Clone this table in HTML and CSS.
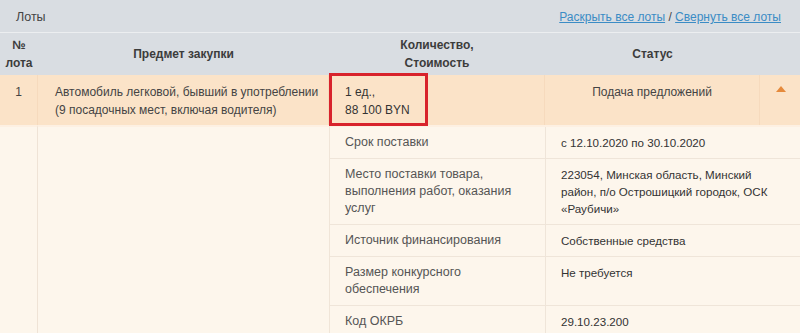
FILE: index.html
```html
<!DOCTYPE html>
<html lang="ru">
<head>
<meta charset="utf-8">
<title>Лоты</title>
<link rel="stylesheet" href="styles.css">
</head>
<body>
<div class="panel">
  <div class="panel-head">
    <span class="panel-title">Лоты</span>
    <span class="panel-links"><a href="#" class="link">Раскрыть все лоты</a> / <a href="#" class="link">Свернуть все лоты</a></span>
  </div>
  <div class="lots">
    <div class="th th-num">№<br>лота</div>
    <div class="th">Предмет закупки</div>
    <div class="th">Количество,<br>Стоимость</div>
    <div class="th">Статус</div>
    <div class="th"></div>

    <div class="td td-num">1</div>
    <div class="td td-subject">Автомобиль легковой, бывший в употреблении<br>(9 посадочных мест, включая водителя)</div>
    <div class="td td-qty">1 ед.,<br>88 100 BYN<span class="highlight"></span></div>
    <div class="td td-status">Подача предложений</div>
    <div class="td td-toggle"><span class="arrow-up"></span></div>

    <div class="blank blank-num"></div>
    <div class="blank blank-subject"></div>
    <div class="details">
      <div class="dl">Срок поставки</div>
      <div class="dv">с 12.10.2020 по 30.10.2020</div>
      <div class="dl">Место поставки товара,<br>выполнения работ, оказания<br>услуг</div>
      <div class="dv">223054, Минская область, Минский<br>район, п/о Острошицкий городок, ОСК<br>«Раубичи»</div>
      <div class="dl">Источник финансирования</div>
      <div class="dv">Собственные средства</div>
      <div class="dl">Размер конкурсного<br>обеспечения</div>
      <div class="dv">Не требуется</div>
      <div class="dl">Код ОКРБ</div>
      <div class="dv">29.10.23.200</div>
    </div>
  </div>
</div>
</body>
</html>
```
FILE: styles.css
```css
html, body {
  margin: 0;
  padding: 0;
  background: #fdf6ec;
}
body {
  font-family: "Liberation Sans", Arial, sans-serif;
  font-size: 12px;
  color: #444;
  width: 800px;
  overflow: hidden;
}
.panel {
  width: 800px;
}
.panel-head {
  display: flex;
  justify-content: space-between;
  align-items: center;
  height: 32px;
  padding: 0 19px 0 16px;
  background: #d9dde2;
  border-bottom: 1px solid #eceef0;
}
.panel-title {
  color: #444;
  font-size: 12.5px;
  padding-top: 2px;
}
.panel-links {
  color: #444;
  font-size: 12px;
  padding-top: 2px;
}
.link {
  color: #3b8cc5;
  text-decoration: underline;
}
.lots {
  display: grid;
  grid-template-columns: 38px 291px 216px 215px 40px;
}
.th {
  background: #d9dde2;
  height: 42px;
  display: flex;
  align-items: center;
  justify-content: center;
  text-align: center;
  font-weight: bold;
  color: #3c3c3c;
  line-height: 18px;
}
.td {
  background: #fbe3c8;
  height: 50px;
  box-sizing: border-box;
  padding: 8px 0 0;
  line-height: 18px;
  font-size: 12px;
  color: #444;
  white-space: nowrap;
  border-right: 1px solid #f6dabd;
}
.td-num {
  text-align: center;
}
.td-subject {
  padding-left: 17px;
}
.td-qty {
  position: relative;
  padding-left: 16px;
  color: #333;
}
.td-status {
  text-align: center;
}
.td-toggle {
  border-right: none;
  display: flex;
  justify-content: center;
  padding-top: 11px;
  padding-left: 2px;
}
.arrow-up {
  width: 0;
  height: 0;
  border-left: 5px solid transparent;
  border-right: 5px solid transparent;
  border-bottom: 6px solid #e58a3c;
}
.highlight {
  position: absolute;
  left: 0;
  top: -2px;
  width: 99px;
  height: 53px;
  box-sizing: border-box;
  border: 3px solid #d8232c;
}
.blank {
  background: #fdf6ec;
  border-top: 2px solid #fdf0e2;
}
.blank-num {
  border-right: 1px solid #efe3d6;
}
.details {
  grid-column: 3 / 6;
  display: grid;
  grid-template-columns: 216px 1fr;
  border-left: 1px solid #f0e5d8;
  border-top: 2px solid #fdf0e2;
}
.dl, .dv {
  padding: 7px 15px;
  line-height: 17px;
  white-space: nowrap;
  border-bottom: 1px solid #efe5d9;
}
.dl {
  font-size: 12.5px;
  color: #555;
  border-right: 1px solid #efe5d9;
}
.dv {
  font-size: 11.6px;
  color: #333;
}
```
